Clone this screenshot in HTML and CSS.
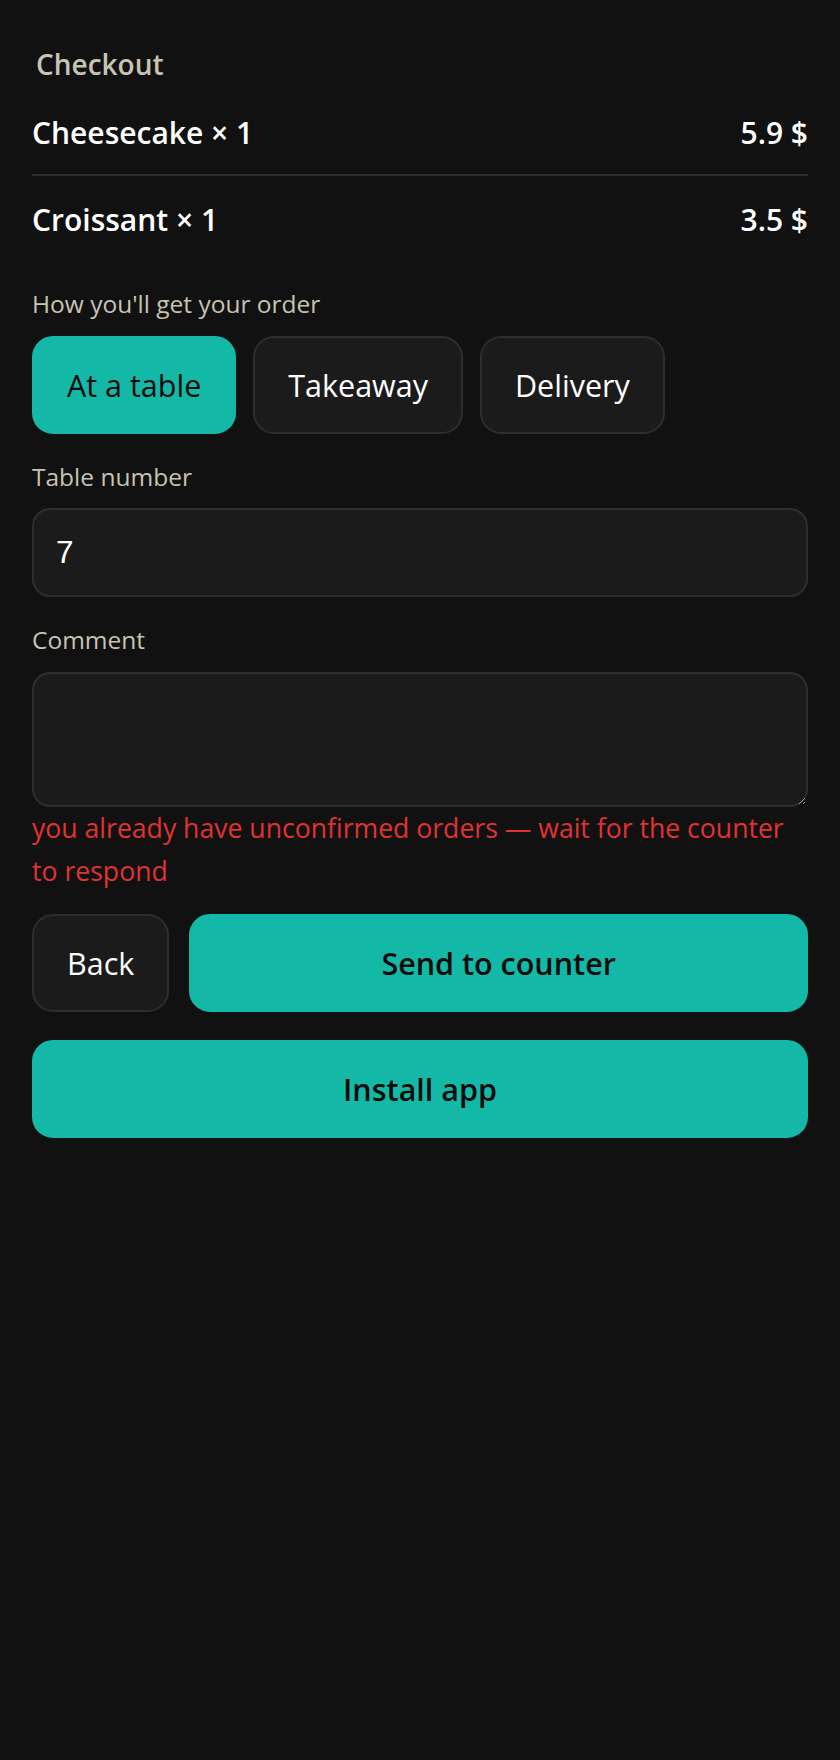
FILE: index.html
```html
<!DOCTYPE html>
<html lang="en">
<head>
    <meta charset="UTF-8">
    <title>Checkout</title>
    <link rel="stylesheet" href="styles.css">
</head>
<body>
    <main class="checkout">
        <h1 class="checkout-title">Checkout</h1>
        <ul class="cart">
            <li class="cart-item"><span>Cheesecake × 1</span><span>5.9 $</span></li>
            <li class="cart-item"><span>Croissant × 1</span><span>3.5 $</span></li>
        </ul>

        <div class="field">
            <div class="field-label">How you'll get your order</div>
            <div class="modes">
                <button class="btn btn-primary">At a table</button>
                <button class="btn">Takeaway</button>
                <button class="btn">Delivery</button>
            </div>
        </div>

        <label class="field">
            <span class="field-label">Table number</span>
            <input class="input" type="text" value="7">
        </label>

        <label class="field">
            <span class="field-label">Comment</span>
            <textarea class="input textarea"></textarea>
        </label>

        <p class="error">you already have unconfirmed orders — wait for the counter to respond</p>

        <div class="actions">
            <button class="btn">Back</button>
            <button class="btn btn-primary btn-strong btn-grow">Send to counter</button>
        </div>
        <button class="btn btn-primary btn-strong btn-block">Install app</button>
    </main>
</body>
</html>
```

FILE: styles.css
```css
body {
    margin: 0;
    background-color: #111111;
    color: #ffffff;
    font-family: 'Open Sans', sans-serif;
}
.checkout {
    padding: 44px 32px;
}
.checkout-title {
    margin: 0 0 5px;
    padding-left: 4px;
    font-size: 28px;
    line-height: 40px;
    font-weight: 600;
    color: #c8c3b5;
}
.cart {
    list-style: none;
    margin: 0;
    padding: 0;
}
.cart-item {
    display: flex;
    justify-content: space-between;
    padding: 22px 0 19px;
    font-size: 30px;
    line-height: 44px;
    font-weight: 600;
}
.cart-item + .cart-item {
    border-top: 2px solid #2e2e2e;
}
.field {
    display: block;
    margin-top: 25px;
}
.field-label {
    display: block;
    margin-bottom: 13.5px;
    font-size: 24.5px;
    line-height: 36px;
    color: #c8c3b5;
}
.modes {
    display: flex;
    gap: 17px;
}
.btn {
    font-family: inherit;
    font-size: 30.5px;
    line-height: 40px;
    padding: 27px 33px;
    border: 2px solid #2e2e2e;
    border-radius: 21px;
    background-color: #1b1b1b;
    color: #ffffff;
    cursor: pointer;
}
.btn-primary {
    background-color: #14b8a6;
    border-color: #14b8a6;
    color: #0b0b0b;
}
.btn-strong {
    font-weight: 600;
}
.input {
    display: block;
    box-sizing: border-box;
    width: 100%;
    height: 89px;
    padding: 0 22px;
    border: 2px solid #2e2e2e;
    border-radius: 18px;
    background-color: #1b1b1b;
    color: #ffffff;
    font-family: 'Liberation Sans', Arial, sans-serif;
    font-size: 31.5px;
}
.textarea {
    height: 135px;
    padding: 20px 22px;
}
.error {
    margin: 0;
    font-size: 26.6px;
    line-height: 43px;
    color: #e03333;
}
.actions {
    display: flex;
    gap: 20px;
    margin-top: 21px;
}
.btn-grow {
    flex: 1;
}
.btn-block {
    display: block;
    width: 100%;
    margin-top: 28px;
}
```
